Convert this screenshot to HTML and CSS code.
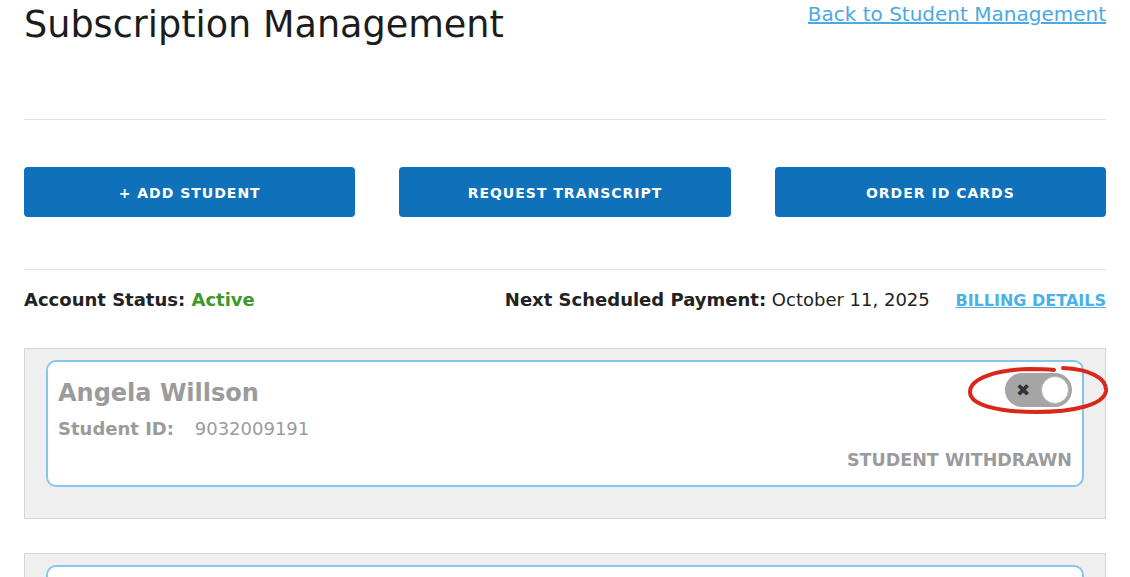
FILE: index.html
```html
<!DOCTYPE html>
<html lang="en">

<head>
	<meta charset="UTF-8">
	<meta name="viewport" content="width=device-width, initial-scale=1.0">
	<title>Subscription Management</title>
	<link rel="stylesheet" href="styles.css">
</head>

<body>
	<div class="page">
		<header class="top">
			<h1>Subscription Management</h1>
			<a href="#" class="back-link">Back to Student Management</a>
		</header>

		<hr class="rule">

		<div class="actions">
			<button class="btn">+ Add Student</button>
			<button class="btn">Request Transcript</button>
			<button class="btn">Order ID Cards</button>
		</div>

		<hr class="rule">

		<div class="status-row">
			<div class="account-status">Account Status: <span class="active">Active</span></div>
			<div class="payment">
				<span class="payment-label">Next Scheduled Payment:</span> October 11, 2025
				<a href="#" class="billing-link">Billing Details</a>
			</div>
		</div>

		<div class="student-list">
			<div class="student-panel">
				<div class="student-card">
					<div class="student-info">
						<div class="student-name">Angela Willson</div>
						<div class="student-id"><b>Student ID:</b> <span>9032009191</span></div>
					</div>
					<div class="student-side">
						<div class="toggle-wrap">
							<div class="toggle">
								<span class="toggle-x">&#10006;</span>
								<span class="toggle-knob"></span>
							</div>
							<svg class="circle-mark" viewBox="0 0 142 52" width="142" height="52">
								<path d="M96 4 C122 5 140 14 139 27 C137 41 106 48 69 48 C31 48 3 41 3 28 C3 14 30 6 62 5 C70 5 79 5 87 6" fill="none" stroke="#d8281c" stroke-width="4" stroke-linecap="round" />
							</svg>
						</div>
						<div class="student-state">Student Withdrawn</div>
					</div>
				</div>
			</div>
			<div class="student-panel">
				<div class="student-card"></div>
			</div>
		</div>
	</div>
</body>

</html>
```

FILE: styles.css
```css
* {
	margin: 0;
	padding: 0;
	box-sizing: border-box;
}

body {
	font-family: "DejaVu Sans", "Inter", sans-serif;
	color: #222;
	background: #fff;
}

.page {
	padding: 0 24px;
}

.top {
	display: flex;
	justify-content: space-between;
	align-items: flex-start;
	height: 119px;
}

.top h1 {
	font-size: 36.6px;
	font-weight: 400;
	line-height: 50px;
	color: #1c1c1c;
}

.back-link {
	font-size: 20px;
	line-height: 28px;
	color: #4ba9df;
}

.rule {
	border: none;
	border-top: 1.5px solid #e2e2e2;
}

.actions {
	display: grid;
	grid-template-columns: repeat(3, 1fr);
	gap: 44px;
	padding: 47px 0 52px;
}

.btn {
	height: 50px;
	padding-top: 2px;
	background-color: #0f71b9;
	border: none;
	border-radius: 4px;
	color: #fff;
	font-family: inherit;
	font-size: 14px;
	font-weight: 700;
	letter-spacing: 1px;
	text-transform: uppercase;
}

.status-row {
	display: flex;
	justify-content: space-between;
	align-items: flex-start;
	padding: 19px 0 0;
	height: 78px;
	font-size: 18px;
}

.account-status,
.payment-label {
	font-weight: 700;
}

.active {
	color: #3b9a2b;
}

.billing-link {
	margin-left: 20px;
	font-size: 16px;
	font-weight: 700;
	color: #4bb0e6;
	text-transform: uppercase;
}

.student-list {
	display: flex;
	flex-direction: column;
	gap: 34px;
}

.student-panel {
	background-color: #efefef;
	border: 1px solid #d6d6d6;
	padding: 11px 21px 31px;
}

.student-card {
	display: flex;
	justify-content: space-between;
	height: 127px;
	background: #fff;
	border: 2px solid #86c5ec;
	border-radius: 10px;
	padding: 14px 10px 15px 10px;
	color: #9b9b9b;
}

.student-name {
	font-size: 24px;
	font-weight: 700;
	line-height: 34px;
}

.student-id {
	font-size: 18px;
	line-height: 30px;
	margin-top: 4px;
}

.student-id span {
	margin-left: 15px;
}

.student-side {
	display: flex;
	flex-direction: column;
	justify-content: space-between;
	align-items: flex-end;
}

.toggle-wrap {
	position: relative;
	margin-top: -3px;
}

.toggle {
	width: 67px;
	height: 34px;
	border-radius: 17px;
	background-color: #a5a5a5;
	display: flex;
	align-items: center;
	justify-content: space-between;
	padding: 0 3px 0 11px;
}

.toggle-x {
	font-size: 17px;
	color: #333;
	line-height: 1;
}

.toggle-knob {
	width: 28px;
	height: 28px;
	border-radius: 50%;
	background: #fff;
	border: 1px solid #b8b8b8;
}

.circle-mark {
	position: absolute;
	left: -38px;
	top: -9px;
}

.student-state {
	font-size: 17.5px;
	font-weight: 700;
	text-transform: uppercase;
}
```
